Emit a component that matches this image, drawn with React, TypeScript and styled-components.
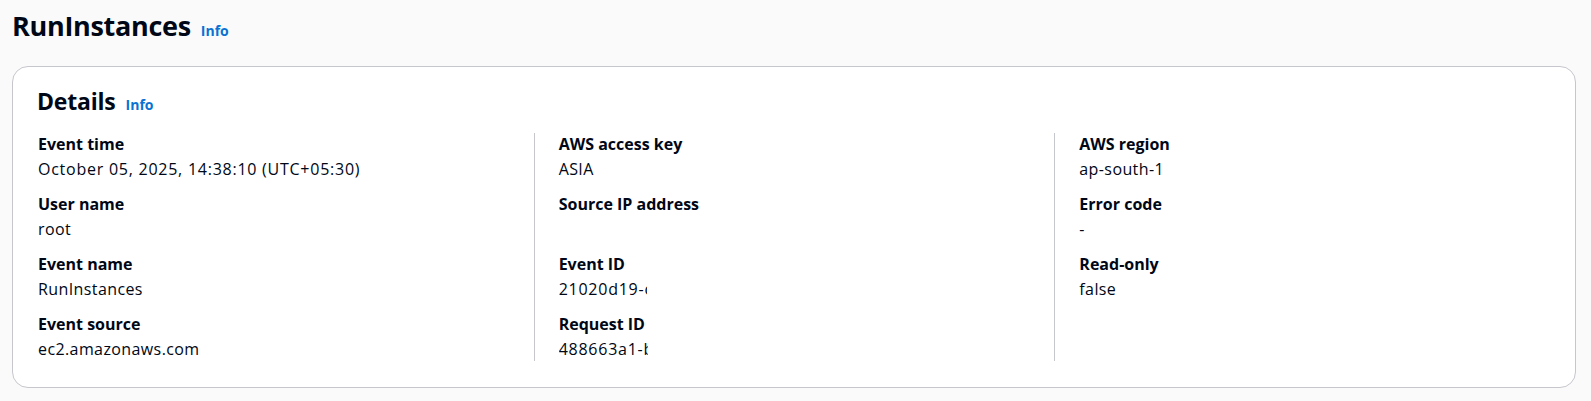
import React from "react";
import styled, { createGlobalStyle } from "styled-components";

const GlobalStyle = createGlobalStyle`
  html, body {
    margin: 0;
    padding: 0;
    background: #fafafa;
  }
  body {
    font-family: "Open Sans", "Noto Sans", Arial, sans-serif;
    color: #000716;
    -webkit-font-smoothing: antialiased;
  }
`;

const Page = styled.div`
  padding: 10px 15px 14px 12px;
  display: flex;
  flex-direction: column;
  gap: 24px;
`;

const HeaderRow = styled.div`
  display: flex;
  align-items: baseline;
  gap: 10px;
`;

const Title = styled.h1`
  margin: 0;
  font-size: 27px;
  line-height: 32px;
  font-weight: 700;
  letter-spacing: -0.3px;
  color: #000716;
`;

const SectionTitle = styled.h2`
  margin: 0;
  font-size: 23px;
  line-height: 28px;
  font-weight: 700;
  letter-spacing: -0.2px;
  color: #000716;
`;

const InfoLink = styled.a`
  font-size: 14px;
  font-weight: 700;
  color: #0972d3;
  text-decoration: none;
  cursor: pointer;
`;

const Card = styled.section`
  background: #ffffff;
  border: 1px solid #c6c6cd;
  border-radius: 16px;
  padding: 20px 0 26px;
  display: flex;
  flex-direction: column;
  gap: 18px;
`;

const CardHeader = styled(HeaderRow)`
  padding: 0 24px;
`;

const Columns = styled.div`
  display: grid;
  grid-template-columns: repeat(3, 1fr);
`;

const Column = styled.div<{ $divider?: boolean }>`
  display: flex;
  flex-direction: column;
  gap: 12px;
  padding-left: 24px;
  border-left: 1px solid ${(p) => (p.$divider ? "#c6c6cd" : "transparent")};
  min-width: 0;
`;

const Pair = styled.div`
  display: flex;
  flex-direction: column;
  gap: 2px;
`;

const Label = styled.div`
  font-size: 16px;
  line-height: 22px;
  font-weight: 700;
  color: #000716;
`;

const Value = styled.div<{ $numeric?: boolean }>`
  font-size: 16px;
  line-height: 24px;
  font-weight: 400;
  letter-spacing: ${(p) => (p.$numeric ? "0.75px" : "0.4px")};
  color: #000716;
  white-space: nowrap;
`;

const Clipped = styled.span<{ $width: number }>`
  display: inline-block;
  overflow: hidden;
  vertical-align: top;
  width: ${(p) => p.$width}px;
`;

type Item = { label: string; value: React.ReactNode; numeric?: boolean };

const columns: Item[][] = [
  [
    {
      label: "Event time",
      value: "October 05, 2025, 14:38:10 (UTC+05:30)",
      numeric: true,
    },
    { label: "User name", value: "root" },
    { label: "Event name", value: "RunInstances" },
    { label: "Event source", value: "ec2.amazonaws.com" },
  ],
  [
    { label: "AWS access key", value: "ASIA" },
    { label: "Source IP address", value: "\u00a0" },
    {
      label: "Event ID",
      value: <Clipped $width={88}>21020d19-c</Clipped>,
      numeric: true,
    },
    {
      label: "Request ID",
      value: <Clipped $width={89}>488663a1-b</Clipped>,
      numeric: true,
    },
  ],
  [
    { label: "AWS region", value: "ap-south-1" },
    { label: "Error code", value: "-" },
    { label: "Read-only", value: "false" },
  ],
];

export default function App() {
  return (
    <>
      <GlobalStyle />
      <Page>
        <HeaderRow>
          <Title>RunInstances</Title>
          <InfoLink>Info</InfoLink>
        </HeaderRow>
        <Card>
          <CardHeader>
            <SectionTitle>Details</SectionTitle>
            <InfoLink>Info</InfoLink>
          </CardHeader>
          <Columns>
            {columns.map((col, i) => (
              <Column key={i} $divider={i > 0}>
                {col.map((item) => (
                  <Pair key={item.label}>
                    <Label>{item.label}</Label>
                    <Value $numeric={item.numeric}>{item.value}</Value>
                  </Pair>
                ))}
              </Column>
            ))}
          </Columns>
        </Card>
      </Page>
    </>
  );
}
